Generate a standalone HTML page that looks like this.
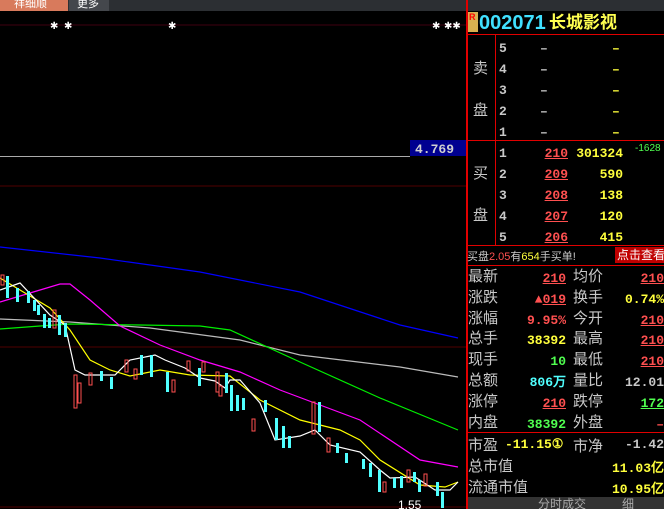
<!DOCTYPE html><html><head><meta charset="utf-8"><style>
*{margin:0;padding:0;box-sizing:border-box}
body{width:664px;height:509px;background:#000;overflow:hidden;position:relative;font-family:"Liberation Sans","Noto Sans CJK SC",sans-serif}
.a{position:absolute;white-space:nowrap}
.r{color:#ff5050}.y{color:#ffff3c}.g{color:#50ff50}.c{color:#50ffff}.w{color:#c8c8c8}
.u{text-decoration:underline}
.L{position:absolute;font-size:15px;color:#c8c8c8;left:468px}
.n{position:absolute;font-size:13px;font-weight:bold;font-family:"Liberation Mono",monospace;text-align:right}
</style></head><body>
<div class="a" style="left:0;top:0;width:464px;height:11px;background:#2c2f33"></div>
<div class="a" style="left:0;top:0;width:68px;height:11px;background:#d87a5c;color:#fff;font-size:11px;line-height:8px;padding-left:14px;overflow:hidden">祥细顺</div>
<div class="a" style="left:69px;top:0;width:40px;height:11px;background:#44474c;color:#fff;font-size:11px;line-height:8px;padding-left:8px;overflow:hidden">更多</div>
<div class="a" style="left:464px;top:0;width:200px;height:11px;background:#2c2f33"></div>
<svg class="a" style="left:0;top:0" width="466" height="509">
<line x1="0" y1="25" x2="466" y2="25" stroke="#400010"/>
<line x1="0" y1="156.5" x2="410" y2="156.5" stroke="#aaa"/>
<line x1="0" y1="186" x2="466" y2="186" stroke="#500000"/>
<line x1="0" y1="347" x2="466" y2="347" stroke="#500000"/>
<line x1="0" y1="507" x2="466" y2="507" stroke="#500000"/>
<g fill="#fff" font-size="10"><text x="50" y="29">✱</text><text x="64" y="29">✱</text><text x="168" y="29">✱</text><text x="432" y="29">✱</text><text x="444" y="29">✱✱</text></g>
<rect x="410" y="140" width="56" height="16" fill="#000090"/>
<text x="415" y="153" fill="#d0d0d0" font-size="13" font-weight="bold" font-family="Liberation Mono">4.769</text>
<g fill="none" stroke-width="1.2">
<polyline stroke="#0000ff" points="0,247 100,258 200,272 300,292 400,325 458,338"/>
<polyline stroke="#bbb" points="0,319 70,322 150,328 240,340 300,355 400,367 458,377"/>
<polyline stroke="#00ee00" points="0,329 40,326 70,324 140,325 200,326 230,330 300,362 380,398 458,430"/>
<polyline stroke="#ff00ff" points="0,302 30,293 60,284 70,284 90,300 120,326 160,345 200,360 240,372 280,390 360,420 420,460 458,467"/>
<polyline stroke="#ffff00" points="0,278 20,290 50,308 70,330 90,360 110,370 130,376 160,370 190,375 230,376 260,400 300,420 340,430 360,440 380,460 420,485 445,487 458,482"/>
<polyline stroke="#fff" points="0,290 20,283 50,315 65,325 75,370 85,375 100,375 115,375 130,360 155,355 165,360 185,368 200,378 215,381 225,388 230,380 240,380 260,403 275,440 300,436 315,430 330,445 360,452 380,470 390,478 415,477 435,490 450,490 458,482"/>
</g>
<g stroke="#ff5050" fill="none">
<rect x="1" y="275" width="3" height="10"/><rect x="53" y="310" width="3" height="18"/><rect x="74" y="375" width="3" height="33"/><rect x="78" y="383" width="3" height="20"/><rect x="89" y="373" width="3" height="12"/><rect x="125" y="360" width="3" height="12"/><rect x="134" y="369" width="3" height="10"/><rect x="172" y="380" width="3" height="12"/><rect x="187" y="361" width="3" height="10"/><rect x="202" y="362" width="3" height="10"/><rect x="216" y="372" width="3" height="20"/><rect x="219" y="386" width="3" height="10"/><rect x="252" y="419" width="3" height="12"/><rect x="312" y="402" width="3" height="32"/><rect x="327" y="438" width="3" height="14"/><rect x="383" y="482" width="3" height="10"/><rect x="407" y="470" width="3" height="12"/><rect x="424" y="474" width="3" height="12"/>
</g>
<g fill="#50ffff">
<rect x="6" y="276" width="3" height="22"/><rect x="16" y="288" width="3" height="14"/><rect x="27" y="291" width="3" height="12"/><rect x="33" y="300" width="3" height="11"/><rect x="37" y="305" width="3" height="10"/><rect x="43" y="314" width="3" height="14"/><rect x="48" y="318" width="3" height="10"/><rect x="58" y="315" width="3" height="20"/><rect x="64" y="323" width="3" height="14"/><rect x="100" y="371" width="3" height="10"/><rect x="110" y="377" width="3" height="12"/><rect x="140" y="355" width="3" height="20"/><rect x="150" y="355" width="3" height="22"/><rect x="166" y="372" width="3" height="20"/><rect x="198" y="368" width="3" height="18"/><rect x="225" y="373" width="3" height="20"/><rect x="230" y="385" width="3" height="26"/><rect x="236" y="395" width="3" height="16"/><rect x="242" y="398" width="3" height="12"/><rect x="264" y="400" width="3" height="12"/><rect x="275" y="418" width="3" height="22"/><rect x="282" y="426" width="3" height="22"/><rect x="288" y="436" width="3" height="12"/><rect x="318" y="402" width="3" height="30"/><rect x="336" y="443" width="3" height="10"/><rect x="345" y="453" width="3" height="10"/><rect x="362" y="459" width="3" height="10"/><rect x="369" y="463" width="3" height="14"/><rect x="378" y="470" width="3" height="22"/><rect x="393" y="478" width="3" height="10"/><rect x="400" y="476" width="3" height="12"/><rect x="413" y="472" width="3" height="10"/><rect x="418" y="480" width="3" height="12"/><rect x="436" y="482" width="3" height="14"/><rect x="441" y="492" width="3" height="16"/>
</g>
<text x="398" y="509" fill="#fff" font-size="12">1.55</text>
</svg>
<div class="a" style="left:466px;top:0;width:2px;height:509px;background:#e00000"></div>
<div class="a" style="left:468px;top:12px;width:10px;height:20px;background:#d8b050;color:#f00;font-size:9px;font-weight:bold;line-height:10px;padding-left:1px">R</div>
<div class="a" style="left:479px;top:12px;font-size:20px;font-weight:bold;color:#40e0ff;line-height:22px">002071</div>
<div class="a" style="left:549px;top:12px;font-size:17px;font-weight:bold;color:#ffff50;line-height:22px">长城影视</div>
<div class="a" style="left:466px;top:34px;width:198px;height:1px;background:#e00000"></div>
<div class="a" style="left:495px;top:34px;width:1px;height:212px;background:#e00000"></div>
<div class="a" style="left:466px;top:140px;width:198px;height:1px;background:#e00000"></div>
<div class="a" style="left:466px;top:245px;width:198px;height:1px;background:#e00000"></div>
<div class="a" style="left:466px;top:265px;width:198px;height:1px;background:#e00000"></div>
<div class="a" style="left:466px;top:432px;width:198px;height:1px;background:#e00000"></div>
<div class="L" style="left:473px;top:57px">卖</div><div class="L" style="left:473px;top:99px">盘</div>
<div class="L" style="left:473px;top:162px">买</div><div class="L" style="left:473px;top:204px">盘</div>
<div class="n w" style="left:499px;top:38px;line-height:21px;text-align:left">5<br>4<br>3<br>2<br>1</div>
<div class="n w" style="left:540px;top:38px;line-height:21px">–<br>–<br>–<br>–<br>–</div>
<div class="n y" style="left:612px;top:38px;line-height:21px">–<br>–<br>–<br>–<br>–</div>
<div class="n w" style="left:499px;top:143px;line-height:21px;text-align:left">1<br>2<br>3<br>4<br>5</div>
<div class="n r u" style="left:538px;top:143px;width:30px;line-height:21px">210<br>209<br>208<br>207<br>206</div>
<div class="n y" style="left:570px;top:143px;width:53px;line-height:21px">301324<br>590<br>138<br>120<br>415</div>
<div class="a g" style="left:635px;top:143px;font-size:10px">-1628</div>
<div class="a w" style="left:467px;top:248px;font-size:11px">买盘<span class="r">2.05</span>有<span class="y">654</span>手买单!</div>
<div class="a" style="left:615px;top:247px;width:49px;height:16px;background:#c00000;color:#fff;font-size:12px;line-height:16px;padding-left:2px">点击查看</div>
<div class="L" style="top:267px;line-height:20.8px">最新<br>涨跌<br>涨幅<br>总手<br>现手<br>总额<br>涨停<br>内盘</div>
<div class="L" style="left:573px;top:267px;line-height:20.8px">均价<br>换手<br>今开<br>最高<br>最低<br>量比<br>跌停<br>外盘</div>
<div class="n" style="left:500px;width:66px;top:269px;line-height:20.8px"><span class="r u">210</span><br><span class="r">▲<u>019</u></span><br><span class="r">9.95%</span><br><span class="y">38392</span><br><span class="g">10</span><br><span class="c">806万</span><br><span class="r u">210</span><br><span class="g">38392</span></div>
<div class="n" style="left:600px;width:64px;top:269px;line-height:20.8px"><span class="r u">210</span><br><span class="y">0.74%</span><br><span class="r u">210</span><br><span class="r u">210</span><br><span class="r u">210</span><br><span class="w">12.01</span><br><span class="g u">172</span><br><span class="r">–</span></div>
<div class="L" style="top:435px;line-height:21px">市盈<br>总市值<br>流通市值</div>
<div class="L" style="left:573px;top:435px">市净</div>
<div class="n y" style="left:505px;top:437px">-11.15①</div>
<div class="n w" style="left:600px;width:64px;top:437px">-1.42</div>
<div class="n y" style="left:600px;width:64px;top:458px;line-height:21px">11.03亿<br>10.95亿</div>
<div class="a" style="left:468px;top:497px;width:196px;height:12px;background:#333;color:#aaa;font-size:12px;line-height:14px;padding-left:70px;overflow:hidden">分时成交<span style="margin-left:36px">细</span></div>
</body></html>
